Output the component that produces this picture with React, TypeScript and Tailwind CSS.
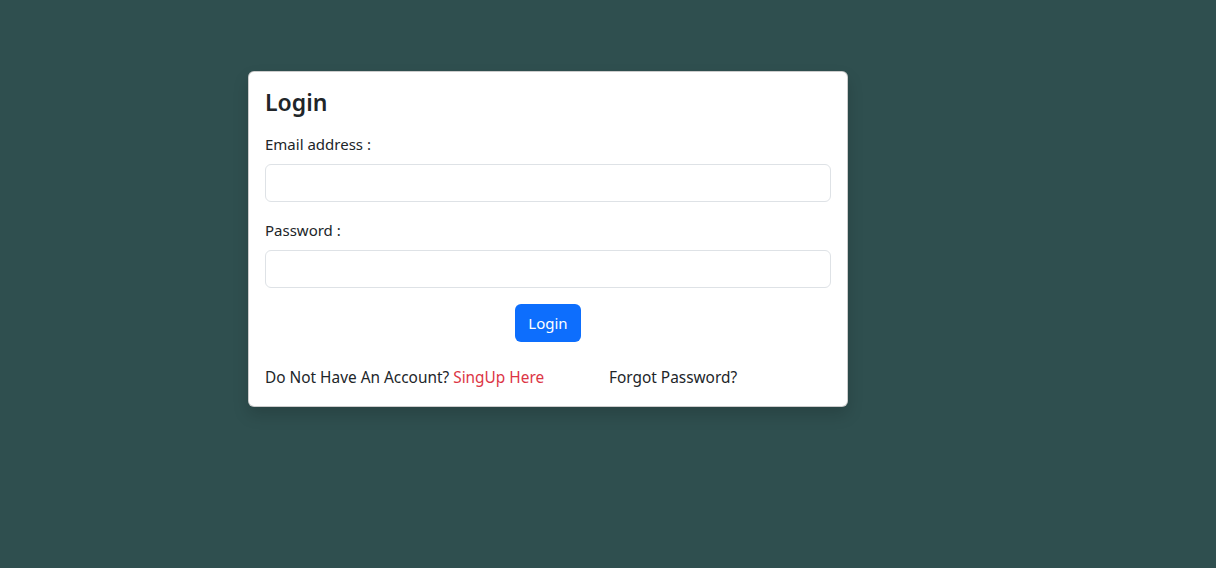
export default function App() {
  return (
    <div className="min-h-[568px] w-full bg-[#2f4f4f] pt-[71px] pl-[248px] text-[#212529]" style={{ fontFamily: '"Noto Sans", "Open Sans", sans-serif' }}>
      <div className="w-[600px] rounded-[6px] border border-black/20 bg-white p-4 shadow-[0_8px_16px_rgba(0,0,0,0.15)]">
        <h4 className="mb-4 text-[23px] font-semibold leading-[28px]">Login</h4>
        <div className="mb-4">
          <label className="mb-2 block text-[15px] leading-6">Email address :</label>
          <input className="block h-[38px] w-full rounded-[6px] border border-[#dee2e6] px-3 outline-none" />
        </div>
        <div className="mb-4">
          <label className="mb-2 block text-[15px] leading-6">Password :</label>
          <input type="password" className="block h-[38px] w-full rounded-[6px] border border-[#dee2e6] px-3 outline-none" />
        </div>
        <div className="flex justify-center">
          <button className="h-[38px] w-[66px] rounded-[6px] bg-[#0d6efd] text-[15px] text-white">Login</button>
        </div>
        <div className="mt-6 flex text-[15.4px] leading-6">
          <div className="w-[344px]">
            Do Not Have An Account? <a className="text-[#dc3545]">SingUp Here</a>
          </div>
          <div>Forgot Password?</div>
        </div>
      </div>
    </div>
  );
}
